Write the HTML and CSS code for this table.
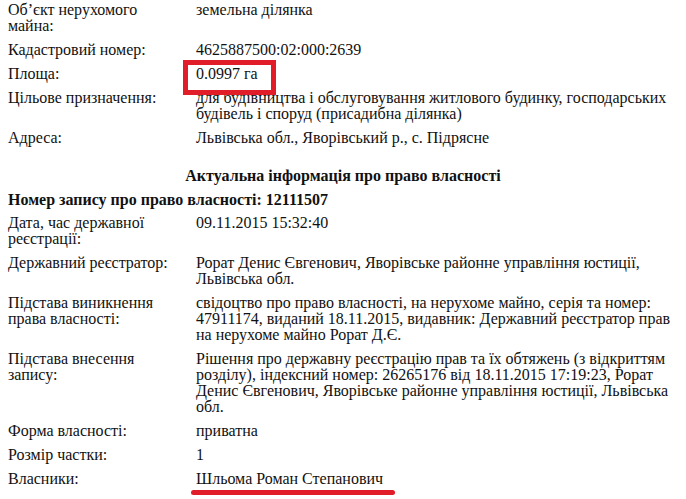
FILE: index.html
```html
<!DOCTYPE html>
<html lang="uk">
<head>
  <meta charset="UTF-8">
  <meta name="viewport" content="width=device-width, initial-scale=1.0">
  <title>Інформація про об'єкт нерухомого майна</title>
  <link rel="stylesheet" href="styles.css">
</head>
<body>
  <dl class="record">
    <dt>Об’єкт нерухомого майна:</dt>
    <dd>земельна ділянка</dd>

    <dt>Кадастровий номер:</dt>
    <dd>4625887500:02:000:2639</dd>

    <dt>Площа:</dt>
    <dd><span class="mark-box">0.0997 га</span></dd>

    <dt>Цільове призначення:</dt>
    <dd>для будівництва і обслуговування житлового будинку, господарських будівель і споруд (присадибна ділянка)</dd>

    <dt>Адреса:</dt>
    <dd>Львівська обл., Яворівський р., с. Підрясне</dd>
  </dl>

  <h2 class="section-title">Актуальна інформація про право власності</h2>
  <h3 class="entry-no">Номер запису про право власності: 12111507</h3>

  <dl class="record">
    <dt>Дата, час державної реєстрації:</dt>
    <dd>09.11.2015 15:32:40</dd>

    <dt>Державний реєстратор:</dt>
    <dd>Рорат Денис Євгенович, Яворівське районне управління юстиції, Львівська обл.</dd>

    <dt>Підстава виникнення права власності:</dt>
    <dd>свідоцтво про право власності, на нерухоме майно, серія та номер: 47911174, виданий 18.11.2015, видавник: Державний реєстратор прав на нерухоме майно Рорат Д.Є.</dd>

    <dt>Підстава внесення запису:</dt>
    <dd>Рішення про державну реєстрацію прав та їх обтяжень (з відкриттям розділу), індексний номер: 26265176 від 18.11.2015 17:19:23, Рорат Денис Євгенович, Яворівське районне управління юстиції, Львівська обл.</dd>

    <dt>Форма власності:</dt>
    <dd>приватна</dd>

    <dt>Розмір частки:</dt>
    <dd>1</dd>

    <dt>Власники:</dt>
    <dd><span class="mark-line">Шльома Роман Степанович</span></dd>
  </dl>
</body>
</html>
```

FILE: styles.css
```css
*,
*::before,
*::after {
  margin: 0;
  padding: 0;
  box-sizing: border-box;
}

html {
  background: #fff;
}

body {
  width: 686px;
  min-height: 499px;
  padding: 2px 8px 0;
  color: #111;
  font-family: "Liberation Serif", "Times New Roman", serif;
  font-size: 16px;
  line-height: 16px;
}

/* label / value table */

.record {
  display: grid;
  grid-template-columns: 188px 1fr;
  row-gap: 8px;
}

.record dt {
  padding-right: 12px;
}

.section-title {
  margin-top: 22px;
  font-size: 16px;
  text-align: center;
}

.entry-no {
  margin: 8px 0 7px;
  font-size: 16px;
}

/* red annotations */

.mark-box {
  position: relative;
}

.mark-box::after {
  content: "";
  position: absolute;
  left: -13px;
  top: -5px;
  width: 93px;
  height: 35px;
  border: 5px solid #e11d2a;
}

.mark-line {
  display: inline-block;
}

.mark-line::after {
  content: "";
  display: block;
  width: 204px;
  height: 5px;
  margin: 3px 0 0 -5px;
  border-radius: 3px;
  background: #e11d2a;
}
```
